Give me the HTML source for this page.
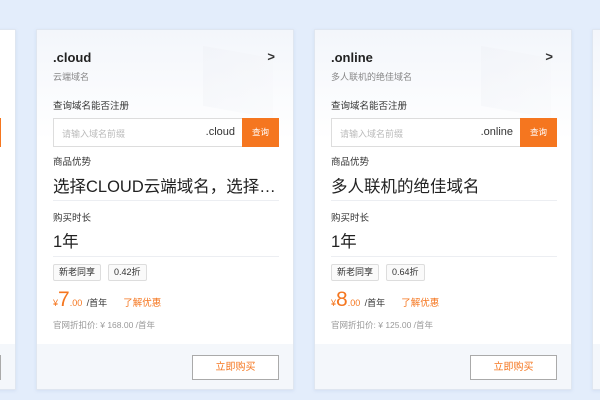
<!DOCTYPE html>
<html><head><meta charset="utf-8"><style>
*{margin:0;padding:0;box-sizing:border-box}
body{width:600px;height:400px;overflow:hidden;background:#e3edfb;font-family:"Liberation Sans","Noto Sans CJK SC",sans-serif;position:relative}
.card{position:absolute;top:29px;width:258px;height:361px;background:#fff;border:1px solid #dfe6f0;box-shadow:0 1px 3px rgba(120,150,200,.15);overflow:hidden}
.hdr{position:absolute;left:0;top:0;width:100%;height:110px;background:linear-gradient(180deg,#f3f6fb 0%,#fff 100%)}
.deco{position:absolute;right:20px;top:22px;width:70px;height:60px;background:linear-gradient(135deg,#f0f2f7,#f9fafc);transform:skewY(10deg);opacity:.6}
.t{position:absolute;left:16px;font-size:13px;font-weight:bold;color:#222;top:20px}
.arr{position:absolute;right:18px;top:19px;font-size:13px;font-weight:bold;color:#333}
.s{position:absolute;left:16px;top:40px;font-size:9px;color:#888}
.l{position:absolute;left:16px;font-size:9.5px;color:#333}
.inp{position:absolute;left:16px;top:88px;width:226px;height:29px;border:1px solid #ddd;background:#fff}
.inp .ph{position:absolute;left:8px;top:8px;font-size:9px;color:#bbb}
.inp .sf{position:absolute;right:43px;top:7px;font-size:11px;color:#333}
.inp .b{position:absolute;right:-1px;top:-1px;width:37px;height:29px;background:#f5761f;color:#fff;font-size:8.5px;text-align:center;line-height:29px}
.big{position:absolute;left:16px;font-size:16.5px;color:#222}
.hr{position:absolute;left:16px;width:226px;height:1px;background:#eceef2}
.tag{position:absolute;top:234px;height:17px;border:1px solid #ddd;border-radius:2px;font-size:9px;color:#333;line-height:15px;padding:0 5px;background:#fafafa}
.pr{position:absolute;left:16px;top:258px;color:#f5761f;white-space:nowrap}
.pr .y{font-size:9px}.pr .n{font-size:21px}.pr .d{font-size:9px}
.pr .u{font-size:9px;color:#333}.pr .k{font-size:9.5px;margin-left:16px}
.og{position:absolute;left:16px;top:289px;font-size:8.5px;color:#999}
.ft{position:absolute;left:0;top:314px;width:100%;height:47px;background:#f4f7fb}
.btn{position:absolute;right:14px;top:11px;width:87px;height:25px;border:1px solid #aaa;background:#fff;color:#f5761f;font-size:10px;text-align:center;line-height:23px}
</style></head><body>

<div class="card" style="left:-242px">
<div class="inp" style="top:88px"><div class="b"></div></div>
<div class="ft"><div class="btn"></div></div>
</div>

<div class="card" style="left:36px">
<div class="hdr"></div><div class="deco"></div>
<div class="t">.cloud</div><div class="arr">&gt;</div>
<div class="s">云端域名</div>
<div class="l" style="top:68px">查询域名能否注册</div>
<div class="inp"><span class="ph">请输入域名前缀</span><span class="sf">.cloud</span><div class="b">查询</div></div>
<div class="l" style="top:124px">商品优势</div>
<div class="big" style="top:143px">选择CLOUD云端域名，选择…</div>
<div class="hr" style="top:170px"></div>
<div class="l" style="top:180px">购买时长</div>
<div class="big" style="top:198px">1年</div>
<div class="hr" style="top:226px"></div>
<div class="tag" style="left:16px">新老同享</div><div class="tag" style="left:71px">0.42折</div>
<div class="pr"><span class="y">¥</span><span class="n">7</span><span class="d">.00</span> <span class="u">/首年</span><span class="k">了解优惠</span></div>
<div class="og">官网折扣价: ¥ 168.00 /首年</div>
<div class="ft"><div class="btn">立即购买</div></div>
</div>

<div class="card" style="left:314px">
<div class="hdr"></div><div class="deco"></div>
<div class="t">.online</div><div class="arr">&gt;</div>
<div class="s">多人联机的绝佳域名</div>
<div class="l" style="top:68px">查询域名能否注册</div>
<div class="inp"><span class="ph">请输入域名前缀</span><span class="sf">.online</span><div class="b">查询</div></div>
<div class="l" style="top:124px">商品优势</div>
<div class="big" style="top:143px">多人联机的绝佳域名</div>
<div class="hr" style="top:170px"></div>
<div class="l" style="top:180px">购买时长</div>
<div class="big" style="top:198px">1年</div>
<div class="hr" style="top:226px"></div>
<div class="tag" style="left:16px">新老同享</div><div class="tag" style="left:71px">0.64折</div>
<div class="pr"><span class="y">¥</span><span class="n">8</span><span class="d">.00</span> <span class="u">/首年</span><span class="k">了解优惠</span></div>
<div class="og">官网折扣价: ¥ 125.00 /首年</div>
<div class="ft"><div class="btn">立即购买</div></div>
</div>

<div class="card" style="left:592px"><div class="hdr"></div><div class="ft"></div></div>
</body></html>
